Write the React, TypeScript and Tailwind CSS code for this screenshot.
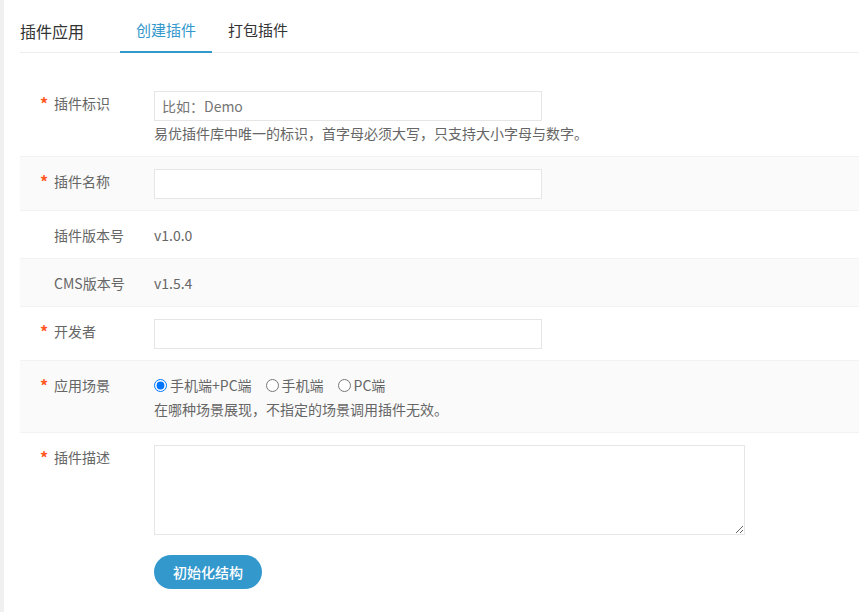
import { useState } from 'react';

const font = { fontFamily: '"Noto Sans CJK SC", "Liberation Sans", sans-serif' };

function Label({ text, required }: { text: string; required?: boolean }) {
  return (
    <div className="w-[134px] shrink-0 flex items-center h-[24px] pl-[20px]">
      <span className="w-[14px] text-[#ff5722] text-[16px] font-bold leading-[24px]">{required ? '*' : ''}</span>
      <span className="text-[#666] text-[14px] leading-[24px]">{text}</span>
    </div>
  );
}

export default function App() {
  const [tab, setTab] = useState(0);
  const [scene, setScene] = useState('all');

  const rowCls = (gray: boolean) =>
    `flex pt-[12px] pb-[11px] border-b border-[#f2f2f2] ${gray ? 'bg-[#fafafa]' : 'bg-white'}`;

  return (
    <div className="flex min-h-screen bg-white" style={font}>
      <div className="w-[4px] shrink-0 bg-[#f0f0f0]" />
      <div className="flex-1 pl-[16px]">
        {/* Header */}
        <div className="flex h-[53px] border-b border-[#eeeeee] pt-[10px]">
          <div className="text-[16px] text-[#333] leading-[42px] mr-[36px]">插件应用</div>
          {['创建插件', '打包插件'].map((t, i) => (
            <div
              key={t}
              onClick={() => setTab(i)}
              className={`px-[16px] h-[43px] -mb-px leading-[40px] text-[15px] cursor-pointer border-b-2 ${
                tab === i ? 'text-[#3398cc] border-[#3398cc]' : 'text-[#333] border-transparent'
              }`}
            >
              {t}
            </div>
          ))}
        </div>

        <div className="pt-[26px]">
          {/* 插件标识 */}
          <div className={rowCls(false)}>
            <Label text="插件标识" required />
            <div>
              <input
                className="w-[388px] h-[30px] border border-[#e6e6e6] px-[7px] text-[14px] text-[#666] outline-none placeholder:text-[#757575]"
                placeholder="比如：Demo"
              />
              <div className="text-[14px] text-[#666] leading-[24px]">
                易优插件库中唯一的标识，首字母必须大写，只支持大小字母与数字。
              </div>
            </div>
          </div>

          {/* 插件名称 */}
          <div className={rowCls(true)}>
            <Label text="插件名称" required />
            <input className="w-[388px] h-[30px] border border-[#e6e6e6] bg-white px-[7px] text-[14px] outline-none" />
          </div>

          {/* 插件版本号 */}
          <div className={rowCls(false)}>
            <Label text="插件版本号" />
            <div className="text-[14px] text-[#666] leading-[24px]">v1.0.0</div>
          </div>

          {/* CMS版本号 */}
          <div className={rowCls(true)}>
            <Label text="CMS版本号" />
            <div className="text-[14px] text-[#666] leading-[24px]">v1.5.4</div>
          </div>

          {/* 开发者 */}
          <div className={rowCls(false)}>
            <Label text="开发者" required />
            <input className="w-[388px] h-[30px] border border-[#e6e6e6] px-[7px] text-[14px] outline-none" />
          </div>

          {/* 应用场景 */}
          <div className={rowCls(true)}>
            <Label text="应用场景" required />
            <div>
              <div className="flex items-center h-[24px] text-[14px] text-[#666]">
                {[
                  ['all', '手机端+PC端'],
                  ['mobile', '手机端'],
                  ['pc', 'PC端'],
                ].map(([v, l]) => (
                  <label key={v} className="flex items-center mr-[14px] cursor-pointer">
                    <input
                      type="radio"
                      name="scene"
                      checked={scene === v}
                      onChange={() => setScene(v)}
                      className="w-[13px] h-[13px] m-0 mr-[3px]"
                    />
                    <span className="leading-[24px]">{l}</span>
                  </label>
                ))}
              </div>
              <div className="text-[14px] text-[#666] leading-[24px]">在哪种场景展现，不指定的场景调用插件无效。</div>
            </div>
          </div>

          {/* 插件描述 */}
          <div className="flex pt-[12px] pb-[24px]">
            <Label text="插件描述" required />
            <div>
              <textarea className="block w-[591px] h-[90px] border border-[#e6e6e6] p-[7px] text-[14px] outline-none" />
              <button className="mt-[20px] w-[108px] h-[34px] rounded-full bg-[#3398cc] text-white text-[14px] font-medium">
                初始化结构
              </button>
            </div>
          </div>
        </div>
      </div>
    </div>
  );
}
